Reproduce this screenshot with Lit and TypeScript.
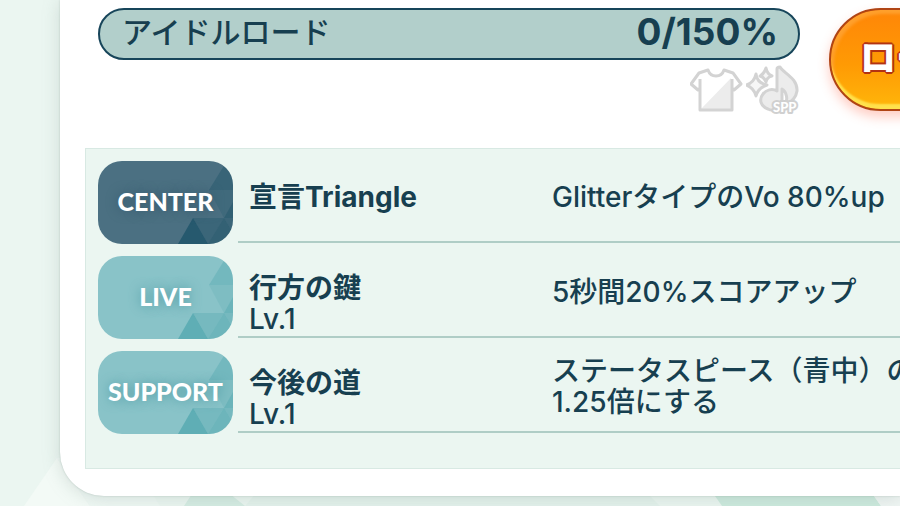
import { LitElement, html, svg, css } from "lit";
import { customElement, property } from "lit/decorators.js";

interface Skill {
  kind: "center" | "live" | "support";
  name: string;
  level?: string;
  effect: string[];
}

const SKILLS: Skill[] = [
  { kind: "center", name: "宣言Triangle", effect: ["GlitterタイプのVo 80%up"] },
  { kind: "live", name: "行方の鍵", level: "Lv.1", effect: ["5秒間20%スコアアップ"] },
  { kind: "support", name: "今後の道", level: "Lv.1", effect: ["ステータスピース（青中）の", "1.25倍にする"] },
];

@customElement("skill-badge")
export class SkillBadge extends LitElement {
  @property({ reflect: true }) kind = "live";

  static styles = css`
    :host {
      position: relative;
      display: flex;
      align-items: center;
      justify-content: center;
      height: 83px;
      box-sizing: border-box;
      padding-bottom: 4px;
      border-radius: 24px;
      overflow: hidden;
      background: #89c3c8;
      color: #fff;
      --facet: #43a0a8;
      --glow: #4b98a2;
    }
    :host([kind="center"]) {
      background: #4b7082;
      --facet: #0e4a60;
      --glow: #34566a;
    }
    .facets {
      position: absolute;
      right: 0;
      bottom: 0;
      width: 57px;
      height: 83px;
      fill: var(--facet);
    }
    .label {
      position: relative;
      font: 900 25px/32px Lato, "Liberation Sans", sans-serif;
      text-shadow: 0 0 12px var(--glow);
    }
  `;

  render() {
    return html`
      <svg class="facets" viewBox="0 0 57 83" aria-hidden="true">
        <path opacity=".3" d="M49 3 33 29H57V3Z" />
        <path opacity=".16" d="M33 29H57V41L48 57Z" />
        <path opacity=".42" d="M57 41 48 57H57Z" />
        <path opacity=".6" d="M17 57 2 83H32Z" />
        <path opacity=".26" d="M17 57H48L32 83Z" />
        <path opacity=".4" d="M48 57 32 83H57V72Z" />
        <path opacity=".26" d="M48 57H57V72Z" />
      </svg>
      <span class="label">${this.kind.toUpperCase()}</span>
    `;
  }
}

@customElement("skill-row")
export class SkillRow extends LitElement {
  @property({ attribute: false }) skill!: Skill;

  static styles = css`
    :host {
      display: grid;
      grid-template-columns: 135px minmax(0, 1fr);
      gap: 5px;
      align-items: start;
    }
    .body {
      display: grid;
      grid-template-columns: 303px minmax(0, 1fr);
      height: 82px;
      box-sizing: border-box;
      padding-left: 11px;
      border-bottom: 2px solid #afcdc6;
      white-space: nowrap;
    }
    .title,
    .effect {
      display: flex;
      flex-direction: column;
      justify-content: center;
      padding-bottom: 8px;
    }
    .leveled {
      justify-content: flex-end;
      padding-bottom: 1px;
    }
    h3,
    p {
      margin: 0;
      font-size: 28px;
      line-height: 31px;
      font-weight: 500;
    }
    h3 {
      font-weight: 700;
    }
  `;

  render() {
    const { kind, name, level, effect } = this.skill;
    return html`
      <skill-badge kind=${kind}></skill-badge>
      <div class="body">
        <div class="title ${level ? "leveled" : ""}">
          <h3>${name}</h3>
          ${level ? html`<p>${level}</p>` : ""}
        </div>
        <div class="effect">${effect.map((line) => html`<p>${line}</p>`)}</div>
      </div>
    `;
  }
}

@customElement("app-root")
export class AppRoot extends LitElement {
  static styles = css`
    :host {
      display: block;
      position: relative;
      min-height: 100vh;
      overflow: hidden;
      background: #ebf6f1;
      color: #173f50;
      font-family: Inter, "Noto Sans CJK JP", sans-serif;
    }
    .backdrop {
      position: absolute;
      left: 0;
      bottom: 0;
      width: 900px;
      height: 60px;
    }
    .card {
      position: relative;
      margin: 0 0 10px 60px;
      padding: 8px 0 27px 25px;
      border-bottom-left-radius: 44px;
      background: #fff;
      box-shadow: 0 2px 18px #7a918a44, 0 0 2px #7a918a66;
    }
    .summary {
      display: grid;
      grid-template-columns: minmax(0, 1fr) 71px;
      gap: 29px;
      padding-left: 13px;
      height: 140px;
    }
    .road {
      display: flex;
      align-items: center;
      justify-content: space-between;
      height: 52px;
      box-sizing: border-box;
      padding: 0 20px 5px 22px;
      border: 2px solid #17455a;
      border-radius: 26px;
      background: #b2cfcb;
    }
    .road-name {
      font-size: 30px;
      line-height: 36px;
      font-weight: 500;
    }
    .road-value {
      font-size: 37px;
      line-height: 44px;
      font-weight: 700;
    }
    .rewards {
      display: flex;
      justify-content: flex-end;
      gap: 2px;
      padding-top: 5px;
    }
    .rewards svg {
      height: 52px;
    }
    .spp {
      font: 900 13px Lato, sans-serif;
    }
    .open {
      width: 260px;
      height: 103px;
      padding: 0 0 10px 29px;
      border: 2px solid #b04414;
      border-radius: 52px;
      background: linear-gradient(#ff8608, #ff9a04 55%, #ffb60a);
      box-shadow: inset 0 -6px 2px -1px #ffe14c, inset 3px 4px 3px #ffa02c, 0 6px 12px #ff6a4a55;
      color: #fff;
      font: 900 36px/44px "Noto Sans CJK JP", sans-serif;
      text-align: left;
      white-space: nowrap;
      text-shadow: 2px 0 #b33312, -2px 0 #b33312, 0 2px #b33312, 0 -2px #b33312, 1px 1px #b33312,
        -1px -1px #b33312, 1px -1px #b33312, -1px 1px #b33312;
    }
    .skills {
      display: flex;
      flex-direction: column;
      gap: 12px;
      margin: 0;
      padding: 12px 0 34px 12px;
      border: 1px solid #d8e9e3;
      border-right: 0;
      background: #ebf6f1;
      list-style: none;
    }
  `;

  private renderShirt() {
    return svg`
      <svg width="54" viewBox="0 0 54 52" role="img" aria-label="衣装">
        <path d="M18 5 9 8 1 19 8 25 10 23V45H42V23L44 25 51 19 43 8 34 5Q32 11 26 11T18 5Z"
          fill="#fff" />
        <path d="M41 13V44H11Z" fill="#ececec" />
        <path d="M18 5 9 8 1 19 8 25 10 23V45H42V23L44 25 51 19 43 8 34 5Q32 11 26 11T18 5ZM10 14V23M42 14V23"
          fill="none" stroke="#d3d3d3" stroke-width="3" stroke-linejoin="round" />
      </svg>`;
  }

  private renderNote() {
    return svg`
      <svg width="54" viewBox="0 0 54 52" role="img" aria-label="SPP">
        <g stroke="#d3d3d3" stroke-width="3" stroke-linejoin="round">
          <path d="M31 4Q31 2 34 2C37 8 52 13 51 26 50 33 46 37 39 40 42 35 41 27 36 24V35C34 43 28 47 22 44 14 41 13 34 17 29 20 25 26 23 31 26Z" fill="#ececec" />
          <path d="M10 9Q11 18 21 20 12 23 10 31 8 23 0 20 8 18 10 9Z" fill="#f6f6f6" />
          <path d="M20 3Q21 9 26 11 21 12 20 17 18 12 14 11 18 9 20 3Z" fill="#f6f6f6" />
        </g>
        <text class="spp" x="27" y="47" fill="#fff" stroke="#d0d0d0" stroke-width="4"
          stroke-linejoin="round" paint-order="stroke">SPP</text>
      </svg>`;
  }

  render() {
    return html`
      <svg class="backdrop" viewBox="0 0 900 60" aria-hidden="true">
        <path d="M57 12 24 60H90Z" fill="#f3faf6" />
        <path d="M90 60 57 12H130L160 60Z" fill="#eff8f4" />
        <path d="M205 28 184 60H245Z" fill="#d5ece3" />
        <path d="M245 60 262 40H640L660 60Z" fill="#e4f2ec" />
        <path d="M708 40 722 60H881L867 40Z" fill="#cdeade" />
        <path d="M867 40 881 60H900V40Z" fill="#f0f6f4" />
      </svg>
      <main class="card">
        <section class="summary">
          <div>
            <div class="road">
              <span class="road-name">アイドルロード</span>
              <span class="road-value">0/150%</span>
            </div>
            <div class="rewards">${this.renderShirt()}${this.renderNote()}</div>
          </div>
          <button class="open" type="button">ロード</button>
        </section>
        <ul class="skills">
          ${SKILLS.map((skill) => html`<li><skill-row .skill=${skill}></skill-row></li>`)}
        </ul>
      </main>
    `;
  }
}
